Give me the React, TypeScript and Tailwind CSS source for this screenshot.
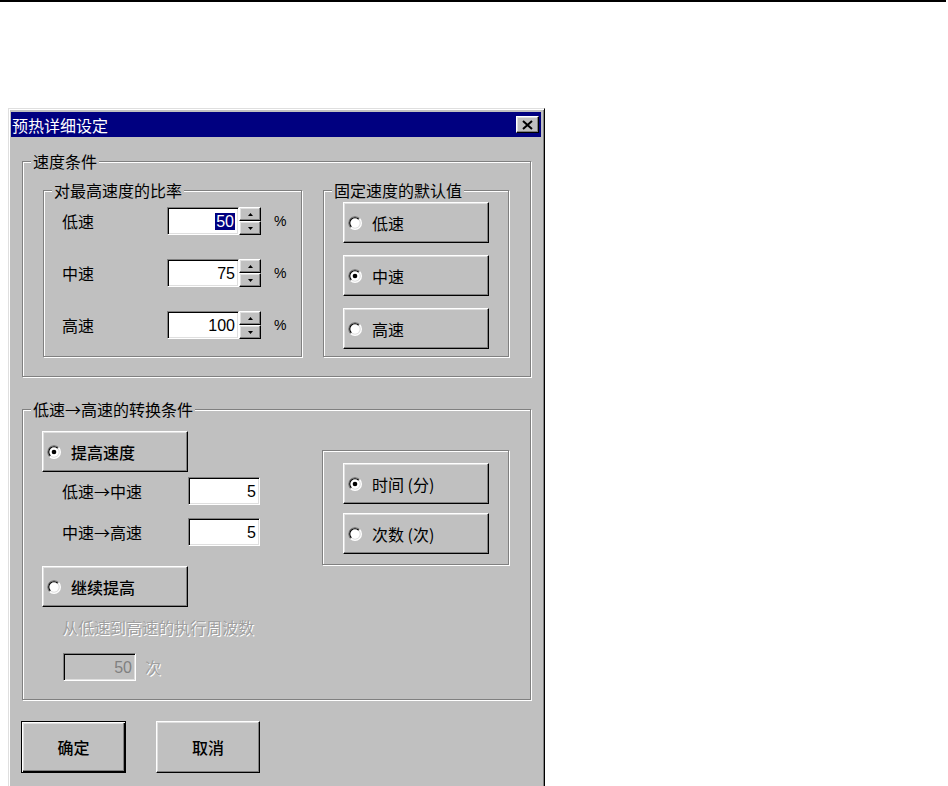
import React from 'react';

const cjk = "font-['Noto_Sans_CJK_SC',sans-serif]";
const num = "font-['Liberation_Sans_Narrow','Liberation_Sans',sans-serif]";
const raised =
  'border border-t-white border-l-white border-r-black border-b-black shadow-[inset_-1px_-1px_0_#808080,inset_1px_1px_0_#dfdfdf]';
const sunken =
  'border border-t-[#808080] border-l-[#808080] border-r-white border-b-white shadow-[inset_1px_1px_0_#000,inset_-1px_-1px_0_#dfdfdf]';
const etched = 'border border-[#808080] shadow-[1px_1px_0_#fff,inset_1px_1px_0_#fff]';

const Radio = ({ checked }: { checked?: boolean }) => (
  <svg width="14" height="14" viewBox="0 0 12 12" className="shrink-0">
    <circle cx="6" cy="6" r="6" fill="#fff" />
    <path d="M1.757 10.243A6 6 0 0 1 10.243 1.757Z" fill="#808080" />
    <circle cx="6" cy="6" r="5" fill="#dfdfdf" />
    <path d="M2.464 9.536A5 5 0 0 1 9.536 2.464Z" fill="#000" />
    <circle cx="6" cy="6" r="4" fill="#fff" />
    {checked && <circle cx="6" cy="6" r="2" fill="#000" />}
  </svg>
);

const PushRadio = ({ label, checked, className = '' }: { label: string; checked?: boolean; className?: string }) => (
  <div className={`${raised} w-[146px] h-[41px] shrink-0 flex items-center pl-[4px] gap-[10px] ${className}`}>
    <Radio checked={checked} />
    <span className="text-[16px] leading-[20px] text-black">{label}</span>
  </div>
);

const GroupBox = ({
  title,
  className = '',
  children,
}: {
  title?: string;
  className?: string;
  children?: React.ReactNode;
}) => (
  <div className={`relative ${etched} ${className}`}>
    {title && (
      <span className="absolute left-[8px] -top-[11px] px-[2px] bg-[#c0c0c0] text-[16px] leading-[20px] text-black whitespace-nowrap">
        {title}
      </span>
    )}
    {children}
  </div>
);

const Arrow = ({ down }: { down?: boolean }) => (
  <svg width="5" height="3" viewBox="0 0 5 3">
    <path d={down ? 'M0 0 L5 0 L2.5 3Z' : 'M0 3 L2.5 0 L5 3Z'} fill="#000" />
  </svg>
);

const Spin = () => (
  <div className="w-[22px] h-[28px] flex flex-col shrink-0">
    <div className={`${raised} h-[14px] flex items-center justify-center`}>
      <Arrow />
    </div>
    <div className={`${raised} h-[14px] flex items-center justify-center`}>
      <Arrow down />
    </div>
  </div>
);

const Field = ({ value, selected, disabled, className = '' }: { value: string; selected?: boolean; disabled?: boolean; className?: string }) => (
  <div
    className={`${sunken} h-[28px] shrink-0 flex items-center justify-end pr-[3px] ${num} text-[16px] leading-[17px] ${
      disabled ? 'bg-[#c0c0c0] text-[#808080]' : 'bg-white text-black'
    } ${className}`}
  >
    {selected ? <span className="bg-[#000080] text-white px-[1px]">{value}</span> : value}
  </div>
);

const speedRows = [
  { label: '低速', value: '50', selected: true },
  { label: '中速', value: '75' },
  { label: '高速', value: '100' },
];

export default function App() {
  return (
    <div className={`w-[948px] h-[786px] bg-white overflow-hidden ${cjk}`}>
      <div className="h-[2px] w-[946px] bg-black" />

      <div className="ml-[8px] mt-[106px] w-[537px] h-[690px] bg-[#c0c0c0] border border-t-[#dfdfdf] border-l-[#dfdfdf] border-r-black border-b-black shadow-[inset_1px_1px_0_#fff,inset_-1px_-1px_0_#808080] pt-[3px] pl-[2px] pr-[3px] flex flex-col">
        {/* Title bar */}
        <div className="h-[25px] bg-[#000080] flex items-center pl-[1px]">
          <span className="text-white text-[16px] leading-[20px]">预热详细设定</span>
          <div className={`${raised} ml-auto mr-[2px] w-[23px] h-[17px] bg-[#c0c0c0] flex items-center justify-center`}>
            <svg width="11" height="10" viewBox="0 0 11 10">
              <path d="M1 1 L10 9 M10 1 L1 9" stroke="#000" strokeWidth="2" />
            </svg>
          </div>
        </div>

        <div className="pl-[11px] pr-[10px] flex flex-col">
          {/* Speed conditions */}
          <GroupBox title="速度条件" className="mt-[24px] h-[216px] flex pl-[20px] pt-[28px] gap-[21px]">
            <GroupBox title="对最高速度的比率" className="w-[259px] h-[167px] shrink-0">
              <div className="flex flex-col gap-[24px] pl-[18px] pt-[16px]">
                {speedRows.map((r) => (
                  <div key={r.label} className="flex items-center h-[28px]">
                    <span className="w-[105px] text-[16px] leading-[20px] text-black">{r.label}</span>
                    <Field value={r.value} selected={r.selected} className="w-[72px]" />
                    <Spin />
                    <span className="ml-[13px] font-['Liberation_Sans_Narrow','Liberation_Sans',sans-serif] text-[14px] text-black">%</span>
                  </div>
                ))}
              </div>
            </GroupBox>

            <GroupBox title="固定速度的默认值" className="w-[186px] h-[167px] shrink-0">
              <div className="flex flex-col gap-[12px] pl-[19px] pt-[11px]">
                <PushRadio label="低速" />
                <PushRadio label="中速" checked />
                <PushRadio label="高速" />
              </div>
            </GroupBox>
          </GroupBox>

          {/* Switch conditions */}
          <GroupBox title="低速→高速的转换条件" className="mt-[32px] h-[291px] flex pl-[19px] pt-[21px]">
            <div className="w-[280px] shrink-0 flex flex-col">
              <PushRadio label="提高速度" checked className="font-medium" />
              <div className="mt-[5px] flex items-center h-[28px] pl-[20px]">
                <span className="w-[126px] text-[16px] leading-[20px] text-black">低速→中速</span>
                <Field value="5" className="w-[72px]" />
              </div>
              <div className="mt-[13px] flex items-center h-[28px] pl-[20px]">
                <span className="w-[126px] text-[16px] leading-[20px] text-black">中速→高速</span>
                <Field value="5" className="w-[72px]" />
              </div>
              <PushRadio label="继续提高" className="mt-[20px] font-medium" />
              <span className="mt-[10px] pl-[20px] text-[16px] leading-[20px] text-[#a0a0a0] [text-shadow:1px_1px_0_#fff]">
                从低速到高速的执行周波数
              </span>
              <div className="mt-[16px] flex items-center pl-[21px]">
                <Field value="50" disabled className="w-[73px]" />
                <span className="ml-[9px] text-[16px] leading-[20px] text-[#a0a0a0] [text-shadow:1px_1px_0_#fff]">次</span>
              </div>
            </div>

            <GroupBox className="mt-[19px] w-[187px] h-[115px] shrink-0">
              <div className="flex flex-col gap-[9px] pl-[20px] pt-[12px]">
                <PushRadio label="时间 (分)" checked />
                <PushRadio label="次数 (次)" />
              </div>
            </GroupBox>
          </GroupBox>
        </div>

        {/* Dialog buttons */}
        <div className="mt-[21px] pl-[10px] flex gap-[30px]">
          <div className="w-[105px] h-[52px] border border-black shadow-[inset_1px_1px_0_#fff,inset_-1px_-1px_0_#000,inset_-2px_-2px_0_#808080,inset_2px_2px_0_#dfdfdf] flex items-center justify-center text-[16px] font-medium text-black">
            确定
          </div>
          <div className={`${raised} w-[104px] h-[52px] flex items-center justify-center text-[16px] font-medium text-black`}>
            取消
          </div>
        </div>
      </div>
    </div>
  );
}
